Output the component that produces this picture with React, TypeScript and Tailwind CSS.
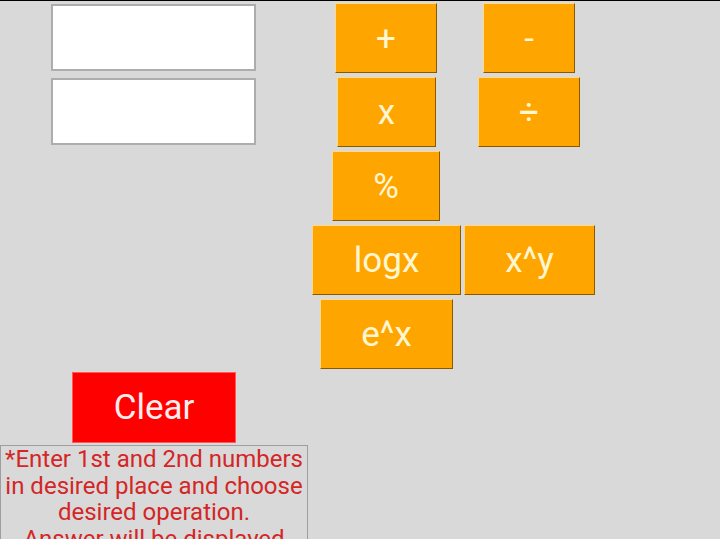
import React from 'react';

const Op: React.FC<{ label: string; className: string }> = ({ label, className }) => (
  <button
    className={`shrink-0 flex items-center justify-center h-[70px] bg-[#ffa500] text-[#fff6d2] text-[35px] leading-none border border-t-[#ffd98a] border-l-[#ffd98a] border-b-[#8a5a00] border-r-[#8a5a00] ${className}`}
  >
    {label}
  </button>
);

const Field: React.FC = () => (
  <input className="shrink-0 ml-[51px] mt-[1px] w-[205px] h-[67px] bg-white border-2 border-[#adadad] outline-none" />
);

export default function App() {
  return (
    <div
      className="w-[720px] h-[539px] overflow-hidden bg-[#d9d9d9] flex flex-col"
      style={{ fontFamily: 'Roboto, "Noto Sans", sans-serif' }}
    >
      <div className="shrink-0 h-[1px] bg-black" />

      {/* first number + add / subtract */}
      <div className="shrink-0 flex items-start mt-[2px]">
        <Field />
        <Op label="+" className="ml-[79px] w-[102px]" />
        <Op label="-" className="ml-[46px] w-[92px]" />
      </div>

      {/* second number + multiply / divide */}
      <div className="shrink-0 flex items-start mt-[4px]">
        <Field />
        <Op label="x" className="ml-[81px] w-[99px]" />
        <Op label="÷" className="ml-[42px] w-[102px]" />
      </div>

      <div className="shrink-0 flex mt-[4px]">
        <Op label="%" className="ml-[332px] w-[108px]" />
      </div>

      <div className="shrink-0 flex mt-[4px]">
        <Op label="logx" className="ml-[312px] w-[149px]" />
        <Op label="x^y" className="ml-[3px] w-[131px]" />
      </div>

      <div className="shrink-0 flex mt-[4px]">
        <Op label="e^x" className="ml-[320px] w-[133px]" />
      </div>

      <button className="shrink-0 mt-[3px] ml-[72px] w-[164px] h-[71px] bg-[#ff0000] text-[#ffecec] text-[35px] leading-none flex items-center justify-center border border-[#ff5a5a]">
        Clear
      </button>

      <div className="shrink-0 mt-[2px] w-[308px] h-[200px] border border-[#9e9e9e] text-center text-[#d42626] text-[24px] leading-[26.5px] whitespace-nowrap">
        *Enter 1st and 2nd numbers
        <br />
        in desired place and choose
        <br />
        desired operation.
        <br />
        Answer will be displayed
        <br />
        in the box below.
      </div>
    </div>
  );
}
